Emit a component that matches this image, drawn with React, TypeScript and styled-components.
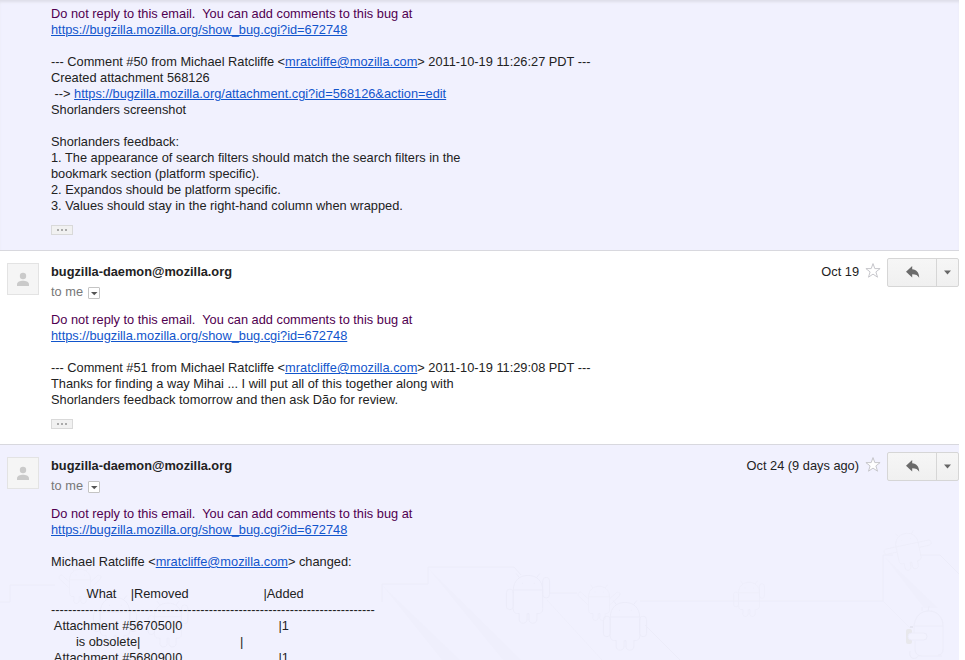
import React from "react";
import styled, { createGlobalStyle } from "styled-components";

const GlobalStyle = createGlobalStyle`
  * { box-sizing: border-box; }
  html, body { margin: 0; background: #fff; }
  body { overflow: hidden; }
`;

const Thread = styled.main`
  width: 965px;
  height: 660px;
  overflow: hidden;
  padding-right: 6px;
  font-family: "Liberation Sans", Arial, sans-serif;
  font-size: 12.8px;
  line-height: 16px;
  color: #222;
  background: #fff;
`;

const Message = styled.article<{ $tinted?: boolean; $height: number; $first?: boolean }>`
  position: relative;
  height: ${(p) => p.$height}px;
  padding: ${(p) => (p.$first ? "6px" : "0")} 0 0;
  background: ${(p) => (p.$tinted ? "#f1f1fe" : "#fff")};
  border-top: ${(p) => (p.$first ? "none" : "1px solid #d8d8de")};
  box-shadow: ${(p) => (p.$first ? "inset 0 3px 3px -1px #dedee8" : "none")};
  overflow: hidden;
`;

const Header = styled.header`
  position: relative;
  display: flex;
  height: 61px;
  padding: 7px 0 0 7px;
`;

const Avatar = styled.div`
  width: 32px;
  height: 32px;
  margin-top: 5px;
  border: 1px solid #e3e3e3;
  background: #f5f5f5;
  svg { display: block; }
`;

const Sender = styled.div`
  flex: 1;
  margin-left: 12px;
  padding-top: 6px;
`;

const Name = styled.div`
  font-weight: bold;
`;

const Recipient = styled.div`
  display: flex;
  align-items: center;
  gap: 5px;
  margin-top: 4px;
  color: #777;
`;

const DetailsButton = styled.button`
  display: block;
  width: 12px;
  height: 12px;
  margin-top: 2px;
  padding: 0;
  border: 1px solid #c4c4c4;
  border-radius: 1px;
  background: #fff;
  svg { display: block; }
`;

const Meta = styled.div`
  display: flex;
  align-items: flex-start;
`;

const DateText = styled.span`
  padding-top: 6px;
`;

const Star = styled.svg`
  width: 16px;
  height: 16px;
  margin: 4px 6px 0 6px;
`;

const ButtonGroup = styled.div`
  display: flex;
  width: 72px;
  height: 29px;
  border: 1px solid #d6d6d6;
  border-radius: 2px;
  background: linear-gradient(#f6f6f6, #f0f0f0);
`;

const ActionButton = styled.button<{ $width: number; $divided?: boolean }>`
  width: ${(p) => p.$width}px;
  height: 27px;
  padding: 0;
  border: 0;
  border-left: ${(p) => (p.$divided ? "1px solid #d6d6d6" : "0")};
  background: transparent;
  svg { display: block; }
`;

const Body = styled.div`
  position: relative;
  padding-left: 51px;
  white-space: pre;
`;

const Notice = styled.span`
  color: #500050;
`;

const Link = styled.a`
  color: #15c;
  text-decoration: underline;
`;

const Ellipsis = styled.button`
  display: flex;
  align-items: center;
  justify-content: center;
  gap: 2px;
  width: 22px;
  height: 10px;
  margin: 11px 0 0 51px;
  padding: 0;
  border: 1px solid #d9d9d9;
  background: #f1f1f1;
`;

const Dot = styled.i`
  width: 2px;
  height: 2px;
  background: #aaa;
`;

const Backdrop = styled.svg`
  position: absolute;
  left: 0;
  top: 85px;
  width: 959px;
  height: 130px;
  pointer-events: none;
`;

function QuoteToggle() {
  return (
    <Ellipsis aria-label="Show trimmed content">
      <Dot /><Dot /><Dot />
    </Ellipsis>
  );
}

function MessageHeader({ date }: { date: string }) {
  return (
    <Header>
      <Avatar>
        <svg width="30" height="30" viewBox="0 0 30 30" fill="#cacaca">
          <circle cx="15" cy="12" r="3.2" />
          <path d="M9 22v-1.600c0-2.500 3.400-3.600 6-3.600s6 1.100 6 3.600V22z" />
        </svg>
      </Avatar>
      <Sender>
        <Name>bugzilla-daemon@mozilla.org</Name>
        <Recipient>
          to me
          <DetailsButton aria-label="Show details">
            <svg width="10" height="10" viewBox="0 0 10 10"><path d="M2 4h6.500L5.250 7.200z" fill="#555" /></svg>
          </DetailsButton>
        </Recipient>
      </Sender>
      <Meta>
        <DateText>{date}</DateText>
        <Star viewBox="0 0 16 16">
          <path d="M8 1.600l1.800 5h5.300l-4.200 3.300 1.600 5.300L8 12.100l-4.500 3.100 1.600-5.300L.9 6.600h5.300z" fill="#fff" stroke="#c6c6cb" strokeWidth="1" />
        </Star>
        <ButtonGroup>
          <ActionButton $width={48} aria-label="Reply">
            <svg width="48" height="27" viewBox="0 0 48 27">
              <path d="M18 12.700 24.200 7v3.300c4.400.5 6.800 3.200 7 8.400-1.400-2.400-3.400-3.500-7-3.500v3.300z" fill="#6b6b6b" />
            </svg>
          </ActionButton>
          <ActionButton $width={22} $divided aria-label="More">
            <svg width="21" height="27" viewBox="0 0 21 27"><path d="M7 11.500h7L10.500 15.500z" fill="#666" /></svg>
          </ActionButton>
        </ButtonGroup>
      </Meta>
    </Header>
  );
}

function BugNotice() {
  return (
    <Notice>
      {"Do not reply to this email.  You can add comments to this bug at\n"}
      <Link>https://bugzilla.mozilla.org/show_bug.cgi?id=672748</Link>
      {"\n\n"}
    </Notice>
  );
}

function Robot({ x, y, s, pose = "wave", tilt = 0 }: { x: number; y: number; s: number; pose?: "wave" | "down" | "cheer" | "spread"; tilt?: number }) {
  const arms = {
    wave: <><rect x="-22" y="-7" width="7" height="21" rx="3.5" /><rect x="15" y="-19" width="7" height="21" rx="3.5" /></>,
    down: <><rect x="-22" y="-7" width="7" height="21" rx="3.5" /><rect x="15" y="-7" width="7" height="21" rx="3.5" /></>,
    cheer: <><path d="M-15 6l-13-12c-5-5 1-9 4-5l9 8M15 6l13-12c5-5-1-9-4-5l-9 8" /></>,
    spread: <><path d="M-15 1h-14c-4 0-4-7 0-7h14M15 1h14c4 0 4-7 0-7H15" /></>,
  }[pose];
  return (
    <g transform={`translate(${x} ${y}) rotate(${tilt}) scale(${s})`}>
      <path d="M-15-6C-15-16-8-21 0-21S15-16 15-6zM-9-19l-3-4M9-19l3-4M-15-6v19c0 4 2 5 6 5v6c0 5 8 5 8 0v-6h2v6c0 5 8 5 8 0v-6c4 0 6-1 6-5V-6" />
      {arms}
      <path d="M-6-13h1M6-13h1" />
    </g>
  );
}

function ThemeDrawing() {
  return (
    <Backdrop viewBox="0 530 959 130" fill="none" stroke="#ececf9" strokeWidth="1">
      <path d="M0 602h10v-17h45M382 602v-18h46v-17h86l7 8M550 593h27M640 601h243v-46h10M920 555h20l19 19M645 625l35 35" />
      <path d="M547 600l55 60M883 601l27 27" stroke="#eeeefb" />
      <path d="M382 585l60 75h18zM428 568l75 92h18zM884 556l40 52h14z" fill="#efeffc" stroke="none" />
      <Robot x={528} y={596} s={0.98} />
      <Robot x={599} y={601} s={0.7} pose="cheer" />
      <Robot x={625} y={623} s={0.98} pose="down" />
      <Robot x={749} y={597} s={0.7} />
      <Robot x={908} y={549} s={0.75} pose="spread" tilt={-12} />
      <path d="M914 626c1-10 7-15 15-15s14 6 14 15zM922 611v-4M928 611l1-5M914 626v7M943 626v23q0 6-5 6M915 641v9q1 6 7 6h20M910 651c-2 8 6 10 9 4" />
      <rect x="906" y="629" width="6" height="15" rx="2" fill="#e8e8ec" stroke="none" />
      <path d="M910 627h3" stroke="#d9d9e4" />
      <rect x="908" y="633" width="19" height="7" rx="3.5" fill="#f2f2fe" />
      <Robot x={80} y={584} s={0.7} pose="cheer" />
      <Robot x={115} y={618} s={0.98} pose="down" />
      <Robot x={168} y={622} s={0.9} />
    </Backdrop>
  );
}

export default function App() {
  return (
    <>
      <GlobalStyle />
      <Thread>
        <Message $tinted $first $height={250}>
          <Body>
            <BugNotice />
            {"--- Comment #50 from Michael Ratcliffe <"}<Link>mratcliffe@mozilla.com</Link>
            {"> 2011-10-19 11:26:27 PDT ---\nCreated attachment 568126\n --> "}
            <Link>https://bugzilla.mozilla.org/attachment.cgi?id=568126&amp;action=edit</Link>
            {"\nShorlanders screenshot\n\nShorlanders feedback:\n1. The appearance of search filters should match the search filters in the\nbookmark section (platform specific).\n2. Expandos should be platform specific.\n3. Values should stay in the right-hand column when wrapped."}
          </Body>
          <QuoteToggle />
        </Message>
        <Message $height={194}>
          <MessageHeader date="Oct 19" />
          <Body>
            <BugNotice />
            {"--- Comment #51 from Michael Ratcliffe <"}<Link>mratcliffe@mozilla.com</Link>
            {"> 2011-10-19 11:29:08 PDT ---\nThanks for finding a way Mihai ... I will put all of this together along with\nShorlanders feedback tomorrow and then ask Dão for review."}
          </Body>
          <QuoteToggle />
        </Message>
        <Message $tinted $height={216}>
          <ThemeDrawing />
          <MessageHeader date="Oct 24 (9 days ago)" />
          <Body>
            <BugNotice />
            {"Michael Ratcliffe <"}<Link>mratcliffe@mozilla.com</Link>{"> changed:\n\n"}
            {"          What    |Removed                     |Added\n"}
            {"-".repeat(76) + "\n"}
            {" Attachment #567050|0                           |1\n"}
            {"       is obsolete|                            |\n"}
            {" Attachment #568090|0                           |1"}
          </Body>
        </Message>
      </Thread>
    </>
  );
}
